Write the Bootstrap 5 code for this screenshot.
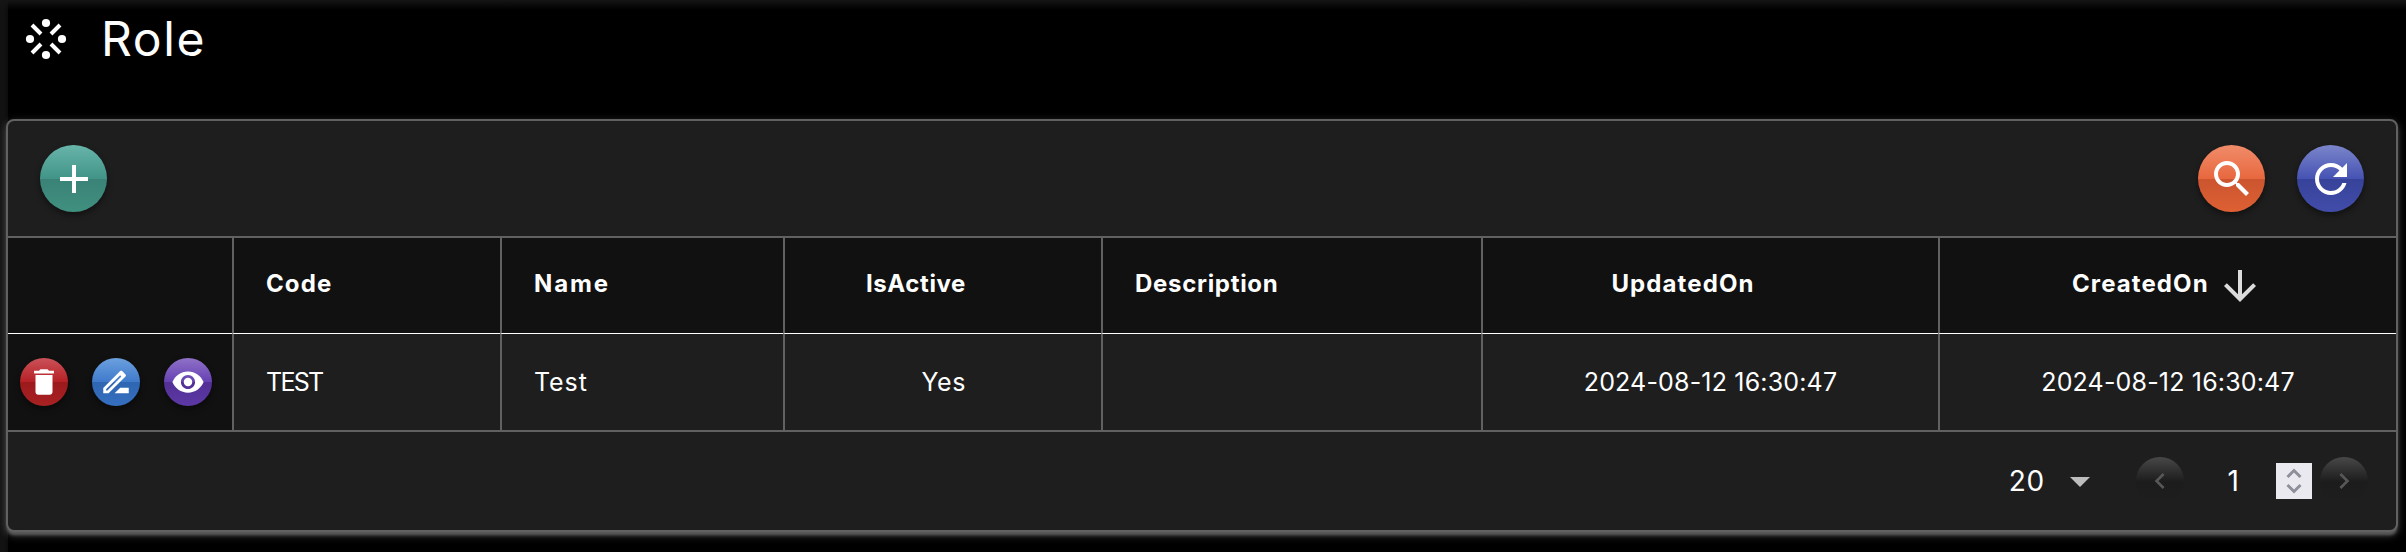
<!DOCTYPE html>
<html lang="en" data-bs-theme="dark">
<head>
<meta charset="utf-8">
<meta name="viewport" content="width=device-width, initial-scale=1">
<title>Role</title>
<link href="https://cdn.jsdelivr.net/npm/bootstrap@5.3.0/dist/css/bootstrap.min.css" rel="stylesheet">
<style>
  :root { --line: #616161; }
  body {
    font-family: Inter, "Liberation Sans", sans-serif;
    height: 552px; overflow: hidden; color: #fff;
    background: linear-gradient(#151515, transparent 10px), linear-gradient(90deg, #121212 4px, #0c0c0c 8px, transparent 8px), #000;
  }
  svg { display: block; flex: none; }
  .page-head { height: 119px; padding: 11px 0 0 18px; }
  .page-title { font-size: 48px; line-height: 56px; letter-spacing: 1.6px; font-weight: 400; margin: 0 0 0 27px; }
  .grid-panel {
    margin: 0 8px 0 6px; height: 413px;
    background: #1e1e1e; border: 2px solid var(--line); border-radius: 8px;
    box-shadow: 0 4px 3px -1px #5a5a5a, 0 3px 9px rgba(255,255,255,.26);
  }
  .tool-strip { height: 115px; padding: 0 32px; }
  .orb { width: 48px; height: 48px; border: 0; padding: 0; border-radius: 50%; display: flex; align-items: center; justify-content: center; flex: none; color: #fff; box-shadow: 0 3px 6px rgba(0,0,0,.45); }
  .orb-lg { width: 67px; height: 67px; }
  .orb-teal { background: linear-gradient(#68b5aa, #429488 50%, #3a8277 50%, #40907f); }
  .orb-orange { background: linear-gradient(#f08c6a, #e8683f 50%, #cb552f 50%, #de6033); }
  .orb-indigo { background: linear-gradient(#7c86cb, #4653b3 50%, #37429a 50%, #414da9); }
  .orb-red { background: linear-gradient(#cb5259, #b52025 50%, #9c1a1c 50%, #a82123); }
  .orb-blue { background: linear-gradient(#6ca0df, #3f7acb 50%, #2f66b1 50%, #356fc0); }
  .orb-purple { background: linear-gradient(#8f71c8, #6641b2 50%, #533095 50%, #5c38a5); }
  .orb-off { background: linear-gradient(#484848, #1c1c1c 52%, #1e1e1e); color: #575757; box-shadow: none; }
  .data-grid { display: grid; grid-template-columns: 224px 268px 283px 318px 380px 457px 1fr; grid-template-rows: 96px 96px; border-top: 2px solid var(--line); border-bottom: 2px solid var(--line); height: 196px; }
  .data-grid > div { display: flex; align-items: center; padding: 2px 32px 0; border-left: 2px solid var(--line); font-size: 25px; white-space: nowrap; }
  .data-grid > .c-act { border-left: 0; background: #111; padding: 0 12px; gap: 24px; }
  .data-grid > .c-head { background: #111; border-bottom: 1px solid #fff; font-size: 24px; font-weight: 700; padding-top: 0; padding-bottom: 3px; }
  .foot-strip { height: 98px; font-size: 28px; padding-right: 28px; }
  .spin-box { width: 36px; height: 36px; background: #e9e9ef; color: #8f8f9b; }
</style>
</head>
<body>
<header class="page-head d-flex align-items-start">
  <svg width="56" height="56" viewBox="-28 -28 56 56" fill="#fff"><circle cx="0" cy="-16" r="4.1"/><circle cx="0" cy="16" r="4.1"/><circle cx="-16" cy="0" r="4.1"/><circle cx="16" cy="0" r="4.1"/><path d="M-14-14-5-5M14-14 5-5M-14 14-5 5M14 14 5 5" stroke="#fff" stroke-width="4"/></svg>
  <h1 class="page-title">Role</h1>
</header>

<main class="grid-panel">
  <div class="tool-strip d-flex align-items-center">
    <button class="orb orb-lg orb-teal me-auto" aria-label="Add"><svg width="48" height="48" viewBox="0 0 24 24" fill="currentColor"><path d="M19 13h-6v6h-2v-6H5v-2h6V5h2v6h6z"/></svg></button>
    <button class="orb orb-lg orb-orange" aria-label="Search"><svg width="48" height="48" viewBox="0 0 24 24" fill="currentColor"><path d="M15.5 14h-.79l-.28-.27C15.41 12.59 16 11.11 16 9.5 16 5.91 13.09 3 9.5 3S3 5.91 3 9.5 5.91 16 9.5 16c1.61 0 3.09-.59 4.23-1.57l.27.28v.79l5 4.99L20.49 19l-4.99-5zm-6 0C7.01 14 5 11.99 5 9.5S7.01 5 9.5 5 14 7.01 14 9.5 11.99 14 9.5 14z"/></svg></button>
    <button class="orb orb-lg orb-indigo" style="margin-left:32px" aria-label="Refresh"><svg width="48" height="48" viewBox="0 0 24 24" fill="currentColor"><path d="M17.65 6.35C16.2 4.9 14.21 4 12 4c-4.42 0-7.99 3.58-7.99 8s3.57 8 7.99 8c3.73 0 6.84-2.55 7.73-6h-2.08c-.82 2.33-3.04 4-5.65 4-3.31 0-6-2.69-6-6s2.69-6 6-6c1.66 0 3.14.69 4.22 1.78L13 11h7V4l-2.35 2.35z"/></svg></button>
  </div>

  <div class="data-grid">
    <div class="c-head c-act"></div>
    <div class="c-head" style="letter-spacing:1.1px">Code</div>
    <div class="c-head" style="letter-spacing:1.9px">Name</div>
    <div class="c-head justify-content-end" style="letter-spacing:.6px;padding-right:135px">IsActive</div>
    <div class="c-head" style="letter-spacing:.7px">Description</div>
    <div class="c-head justify-content-center" style="letter-spacing:1.1px;padding:0 55px 3px 0">UpdatedOn</div>
    <div class="c-head" style="letter-spacing:1.1px;padding-left:132px">CreatedOn<svg width="48" height="48" viewBox="0 0 24 24" fill="#dcdcdc" style="margin-left:7px;margin-top:4px"><path d="m20 12-1.41-1.41L13 16.17V4h-2v12.17l-5.58-5.59L4 12l8 8 8-8z"/></svg></div>

    <div class="c-act">
      <button class="orb orb-red" aria-label="Delete"><svg width="34" height="34" viewBox="0 0 24 24" fill="currentColor"><path d="M6 19c0 1.1.9 2 2 2h8c1.1 0 2-.9 2-2V7H6v12zM19 4h-3.5l-1-1h-5l-1 1H5v2h14V4z"/></svg></button>
      <button class="orb orb-blue" aria-label="Edit"><svg width="34" height="34" viewBox="0 0 24 24" fill="currentColor"><path d="m15 16-4 4h10v-4zM18.71 8.04c.39-.39.39-1.02 0-1.41l-2.34-2.34c-.39-.39-1.02-.39-1.41 0L3 16.25V20h3.75zM5.92 18H5v-.92L14.6 7.5c.6-.5 1.4.2.9.9z" fill-rule="evenodd"/></svg></button>
      <button class="orb orb-purple" aria-label="View"><svg width="34" height="34" viewBox="0 0 24 24" fill="currentColor"><path d="M12 4.5C7 4.5 2.73 7.61 1 12c1.73 4.39 6 7.5 11 7.5s9.27-3.11 11-7.5c-1.73-4.39-6-7.5-11-7.5zM12 17c-2.76 0-5-2.24-5-5s2.24-5 5-5 5 2.24 5 5-2.24 5-5 5zm0-8c-1.66 0-3 1.34-3 3s1.34 3 3 3 3-1.34 3-3-1.34-3-3-3z"/></svg></button>
    </div>
    <div style="letter-spacing:-1.7px">TEST</div>
    <div style="letter-spacing:.9px">Test</div>
    <div class="justify-content-end" style="letter-spacing:.6px;padding-right:135px">Yes</div>
    <div></div>
    <div class="justify-content-center" style="letter-spacing:.17px">2024-08-12 16:30:47</div>
    <div class="justify-content-center" style="letter-spacing:.17px">2024-08-12 16:30:47</div>
  </div>

  <div class="foot-strip d-flex align-items-center justify-content-end">
    <span style="letter-spacing:.5px">20</span>
    <svg width="20" height="10" viewBox="0 0 20 10" style="margin:2px 46px 0 25px"><path d="M0 0h20L10 10z" fill="#bdbdbd"/></svg>
    <button class="orb orb-off" aria-label="Previous page"><svg width="32" height="32" viewBox="0 0 24 24" fill="currentColor"><path d="M15.41 7.41 14 6l-6 6 6 6 1.41-1.41L10.83 12z"/></svg></button>
    <span style="margin-left:44px;margin-right:37px">1</span>
    <div class="spin-box d-flex flex-column align-items-center justify-content-between py-1">
      <svg width="16" height="12" viewBox="0 0 16 12" fill="none" stroke="currentColor" stroke-width="3"><path d="m1.5 10 6.5-6.5 6.5 6.5"/></svg>
      <svg width="16" height="12" viewBox="0 0 16 12" fill="none" stroke="currentColor" stroke-width="3"><path d="m1.5 2 6.5 6.5 6.5-6.5"/></svg>
    </div>
    <button class="orb orb-off ms-2" aria-label="Next page"><svg width="32" height="32" viewBox="0 0 24 24" fill="currentColor"><path d="M10 6 8.590 7.410 13.170 12l-4.580 4.590L10 18l6-6z"/></svg></button>
  </div>
</main>
<script src="https://cdn.jsdelivr.net/npm/bootstrap@5.3.0/dist/js/bootstrap.bundle.min.js"></script>
</body>
</html>
